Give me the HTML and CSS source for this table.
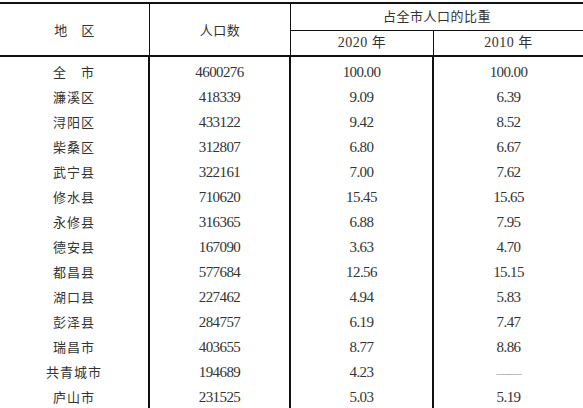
FILE: index.html
```html
<!DOCTYPE html>
<html lang="zh-CN">
<head>
  <meta charset="UTF-8">
  <title>各地区人口</title>
  <link rel="stylesheet" href="styles.css">
</head>
<body>

<table class="pop-table">
  <colgroup>
    <col class="c-region">
    <col class="c-pop">
    <col class="c-y2020">
    <col class="c-y2010">
  </colgroup>
  <thead>
    <tr class="head-top">
      <th rowspan="2" class="h-region">地　区</th>
      <th rowspan="2" class="h-pop">人口数</th>
      <th colspan="2" class="h-share">占全市人口的比重</th>
    </tr>
    <tr class="head-sub">
      <th class="h-y2020">2020 年</th>
      <th class="h-y2010">2010 年</th>
    </tr>
  </thead>
  <tbody>
    <tr class="first"><td>全　市</td><td>4600276</td><td>100.00</td><td>100.00</td></tr>
    <tr><td>濂溪区</td><td>418339</td><td>9.09</td><td>6.39</td></tr>
    <tr><td>浔阳区</td><td>433122</td><td>9.42</td><td>8.52</td></tr>
    <tr><td>柴桑区</td><td>312807</td><td>6.80</td><td>6.67</td></tr>
    <tr><td>武宁县</td><td>322161</td><td>7.00</td><td>7.62</td></tr>
    <tr><td>修水县</td><td>710620</td><td>15.45</td><td>15.65</td></tr>
    <tr><td>永修县</td><td>316365</td><td>6.88</td><td>7.95</td></tr>
    <tr><td>德安县</td><td>167090</td><td>3.63</td><td>4.70</td></tr>
    <tr><td>都昌县</td><td>577684</td><td>12.56</td><td>15.15</td></tr>
    <tr><td>湖口县</td><td>227462</td><td>4.94</td><td>5.83</td></tr>
    <tr><td>彭泽县</td><td>284757</td><td>6.19</td><td>7.47</td></tr>
    <tr><td>瑞昌市</td><td>403655</td><td>8.77</td><td>8.86</td></tr>
    <tr><td>共青城市</td><td>194689</td><td>4.23</td><td><span class="dash">——</span></td></tr>
    <tr><td>庐山市</td><td>231525</td><td>5.03</td><td>5.19</td></tr>
  </tbody>
</table>

</body>
</html>
```

FILE: styles.css
```css
body {
  margin: 0;
  padding-top: 2px;
  background: #fff;
  font-family: "Liberation Serif", "Noto Sans CJK SC", serif;
  font-size: 13px;
  color: #333;
}
.pop-table {
  border-collapse: separate;
  border-spacing: 0;
  table-layout: fixed;
  width: 583px;
  border-top: 2px solid #111;
}
.c-region { width: 150px; }
.c-pop { width: 141px; }
.c-y2020 { width: 143px; }
.c-y2010 { width: 149px; }

th, td {
  padding: 0;
  text-align: center;
  vertical-align: middle;
  font-weight: normal;
}
th {
  letter-spacing: 0.5px;
}
.h-region,
.h-pop {
  border-right: 1px solid #111;
  border-bottom: 2px solid #111;
}
.h-share {
  line-height: 26px;
  border-bottom: 1px solid #111;
}
.head-sub th {
  line-height: 24px;
  font-size: 14px;
  border-bottom: 2px solid #111;
}
.h-y2020 {
  border-right: 1px solid #111;
}

td {
  line-height: 25px;
}
td:nth-child(1) {
  letter-spacing: 1px;
  border-right: 2px solid #111;
}
td:nth-child(2),
td:nth-child(3) {
  border-right: 2px solid #111;
}
td:nth-child(n+2) {
  font-size: 15px;
  letter-spacing: -0.6px;
}
.first td {
  padding-top: 3px;
}
.dash {
  font-size: 13px;
  color: #888;
  letter-spacing: -1px;
}
```
